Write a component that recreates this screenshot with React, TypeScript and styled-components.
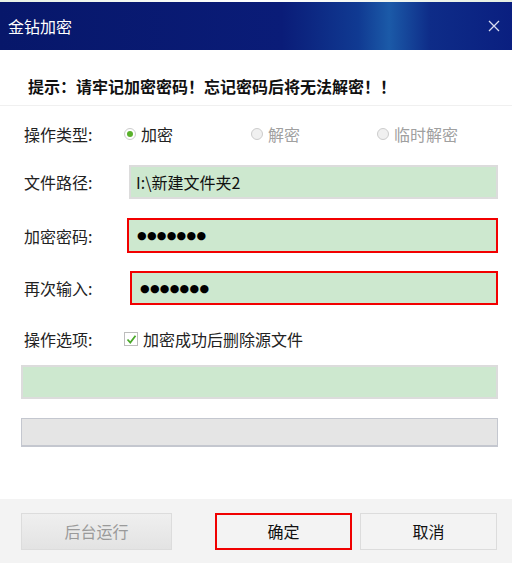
import React from 'react';
import styled, { createGlobalStyle } from 'styled-components';

const GlobalStyle = createGlobalStyle`
  html, body {
    margin: 0;
    padding: 0;
    background: #ffffff;
  }
  * { box-sizing: border-box; }
`;

const FONT = `"Noto Sans CJK SC", "Noto Sans", sans-serif`;

const Window = styled.div`
  width: 512px;
  height: 563px;
  display: flex;
  flex-direction: column;
  font-family: ${FONT};
  background: #ffffff;
  overflow: hidden;
`;

const TopStrip = styled.div`
  height: 2px;
  background: linear-gradient(90deg, #e8f1e4 0%, #ffffff 50%, #e6efe2 100%);
`;

const TitleBar = styled.div`
  height: 48px;
  display: flex;
  align-items: center;
  justify-content: space-between;
  padding: 0 8px 0 8px;
  background: linear-gradient(
    90deg,
    #07176a 0%,
    #0a1c78 55%,
    #103a92 70%,
    #1b5aa8 76%,
    #0e2c88 84%,
    #0a1f80 100%
  );
`;

const Title = styled.span`
  color: #ffffff;
  font-size: 16px;
  line-height: 20px;
`;

const CloseButton = styled.div`
  width: 14px;
  height: 14px;
  margin-right: 3px;
  display: flex;
  align-items: center;
  justify-content: center;
`;

const Hint = styled.div`
  height: 56px;
  padding: 26px 0 0 28px;
  font-size: 16px;
  font-weight: bold;
  color: #111111;
  line-height: 20px;
  border-bottom: 1px solid #f0f0f0;
`;

const Form = styled.div`
  flex: 1;
  display: flex;
  flex-direction: column;
  padding: 0 14px 0 21px;
`;

const Row = styled.div<{ $top: number; $h?: number }>`
  display: flex;
  align-items: center;
  margin-top: ${({ $top }) => $top}px;
  height: ${({ $h }) => $h ?? 34}px;
`;

const Label = styled.span`
  width: 103px;
  padding-left: 3px;
  font-size: 16px;
  color: #222222;
  flex-shrink: 0;
`;

const Option = styled.label<{ $w: number; $disabled?: boolean }>`
  width: ${({ $w }) => $w}px;
  display: flex;
  align-items: center;
  gap: 5px;
  font-size: 16px;
  color: ${({ $disabled }) => ($disabled ? '#a0a0a0' : '#222222')};
`;

const Radio = styled.span<{ $checked?: boolean }>`
  width: 12px;
  height: 12px;
  border-radius: 50%;
  border: 1px solid #cccccc;
  background: ${({ $checked }) => ($checked ? '#ffffff' : '#f0f0f0')};
  display: flex;
  align-items: center;
  justify-content: center;
  &::after {
    content: '';
    display: ${({ $checked }) => ($checked ? 'block' : 'none')};
    width: 6px;
    height: 6px;
    border-radius: 50%;
    background: #5ab12c;
  }
`;

const Check = styled.span`
  width: 14px;
  height: 14px;
  border: 1px solid #bdbdbd;
  background: #ffffff;
  display: flex;
  align-items: center;
  justify-content: center;
`;

const Field = styled.div<{ $error?: boolean; $offset?: number }>`
  flex: 1;
  height: 100%;
  margin-left: ${({ $offset }) => $offset ?? 0}px;
  display: flex;
  align-items: center;
  padding-left: ${({ $error }) => ($error ? 8 : 5)}px;
  background: #cde8cf;
  border: ${({ $error }) => ($error ? '2px solid #f20000' : '2px solid #dcdcdc')};
  font-size: 16px;
  color: #111111;
`;

const Dots = styled.span`
  font-family: "DejaVu Sans", sans-serif;
  font-size: 11px;
  letter-spacing: 0.3px;
  color: #000000;
`;

const Box = styled.div<{ $top: number; $h: number }>`
  margin-top: ${({ $top }) => $top}px;
  height: ${({ $h }) => $h}px;
  background: #cde8cf;
  border: 2px solid #dcdcdc;
`;

const Progress = styled.div`
  margin-top: 19px;
  height: 29px;
  background: #e5e5e5;
  border: 1px solid #c4c7cf;
  border-bottom-width: 2px;
`;

const Footer = styled.div`
  height: 64px;
  background: #f3f3f3;
  display: flex;
  align-items: center;
  padding: 0 15px 0 21px;
`;

const Button = styled.div<{ $w: number; $variant?: 'disabled' | 'primary' | 'normal'; $ml?: number }>`
  width: ${({ $w }) => $w}px;
  height: 37px;
  margin-left: ${({ $ml }) => $ml ?? 0}px;
  display: flex;
  align-items: center;
  justify-content: center;
  font-size: 16px;
  color: ${({ $variant }) => ($variant === 'disabled' ? '#9a9a9a' : '#111111')};
  background: ${({ $variant }) =>
    $variant === 'disabled' ? 'linear-gradient(#efefef, #e3e3e3)' : '#f3f3f3'};
  border: ${({ $variant }) => ($variant === 'primary' ? '2px solid #f00000' : '1px solid #dcdcdc')};
`;

const App = () => {
  return (
    <>
      <GlobalStyle />
      <Window>
        <TopStrip />
        <TitleBar>
          <Title>金钻加密</Title>
          <CloseButton>
            <svg width="12" height="12" viewBox="0 0 12 12">
              <path d="M1 1 L11 11 M11 1 L1 11" stroke="#d8dcf0" strokeWidth="1.3" />
            </svg>
          </CloseButton>
        </TitleBar>
        <Hint>提示：请牢记加密密码！忘记密码后将无法解密！！</Hint>
        <Form>
          <Row $top={11}>
            <Label>操作类型:</Label>
            <Option $w={127}>
              <Radio $checked />
              加密
            </Option>
            <Option $w={126} $disabled>
              <Radio />
              解密
            </Option>
            <Option $w={100} $disabled>
              <Radio />
              临时解密
            </Option>
          </Row>
          <Row $top={14}>
            <Label>文件路径:</Label>
            <Field $offset={5}>I:\新建文件夹2</Field>
          </Row>
          <Row $top={19} $h={35}>
            <Label>加密密码:</Label>
            <Field $error $offset={3}>
              <Dots>●●●●●●●</Dots>
            </Field>
          </Row>
          <Row $top={18}>
            <Label>再次输入:</Label>
            <Field $error $offset={6}>
              <Dots>●●●●●●●</Dots>
            </Field>
          </Row>
          <Row $top={17}>
            <Label>操作选项:</Label>
            <Option $w={220}>
              <Check>
                <svg width="11" height="11" viewBox="0 0 11 11">
                  <path d="M1.5 5.5 L4.3 8.5 L9.5 1.8" stroke="#4aa82a" strokeWidth="1.8" fill="none" />
                </svg>
              </Check>
              加密成功后删除源文件
            </Option>
          </Row>
          <Box $top={9} $h={34} />
          <Progress />
        </Form>
        <Footer>
          <Button $w={151} $variant="disabled">后台运行</Button>
          <Button $w={137} $variant="primary" $ml={43}>确定</Button>
          <Button $w={137} $ml={8}>取消</Button>
        </Footer>
      </Window>
    </>
  );
};

export default App;
